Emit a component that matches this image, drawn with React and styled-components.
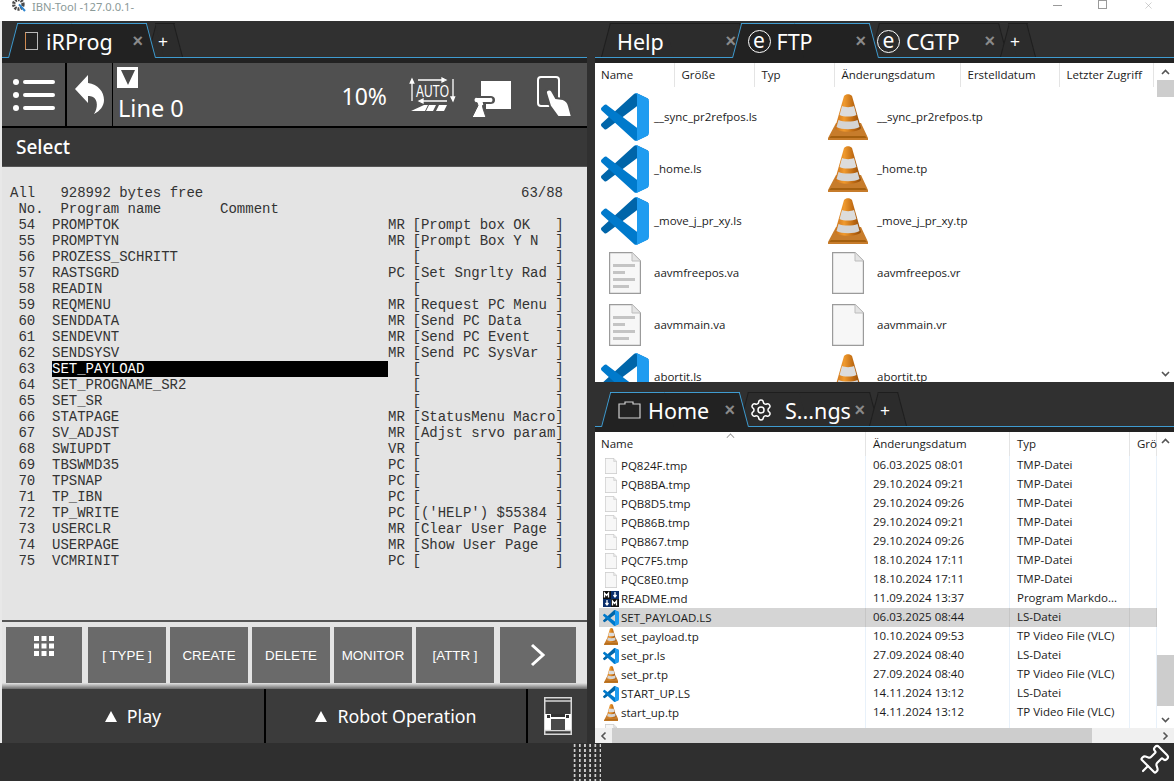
import React from 'react'
import styled, { createGlobalStyle, css } from 'styled-components'
import { Pin, Settings, X } from 'lucide-react'

const GlobalStyle = createGlobalStyle`
  html, body { margin: 0; padding: 0; background: #fff; }
  * { box-sizing: border-box; }
`

const UI_FONT = `"Noto Sans", "Open Sans", sans-serif`
const LIST_FONT = `"Open Sans", "Noto Sans", sans-serif`

const Window = styled.div`
  width: 1174px;
  height: 781px;
  overflow: hidden;
  display: flex;
  flex-direction: column;
  padding-left: 2px;
  background: #e8e8e8;
  font-family: ${UI_FONT};
`
const TitleBar = styled.div`
  height: 21px;
  margin-left: -2px;
  padding-left: 11px;
  background: #fff;
  display: flex;
  align-items: flex-start;
  overflow: hidden;
  flex: none;
`
const TitleText = styled.span`
  margin-left: 5px;
  font-size: 11.2px;
  line-height: 13px;
  color: #8b9a98;
`
const WindowControls = styled.div`
  margin-left: auto;
  padding-right: 20px;
  display: flex;
  gap: 36px;
  color: #9a9a9a;
`
const MinimizeMark = styled.span`
  width: 9px;
  height: 1px;
  margin-top: 5px;
  background: #9a9a9a;
`
const MaximizeMark = styled.span`
  width: 9px;
  height: 9px;
  border: 1px solid #9a9a9a;
`
const Main = styled.div`
  flex: 1;
  min-height: 0;
  display: flex;
  background: #303030;
`
const LeftPane = styled.section`
  width: 585px;
  flex: none;
  display: flex;
  flex-direction: column;
`
const RightPane = styled.section`
  width: 579px;
  margin-left: 8px;
  flex: none;
  display: flex;
  flex-direction: column;
`
const TabRow = styled.div`
  display: flex;
  padding-left: 6px;
  padding-top: ${p => p.$top}px;
  border-bottom: 1px solid #3f9bd0;
  background: #303030;
  flex: none;
`
const TabBand = styled.div`
  height: 5px;
  background: #222;
  flex: none;
`
const Tab = styled.div`
  position: relative;
  width: ${p => p.$w}px;
  height: 34px;
  margin-left: ${p => p.$ml || 0}px;
  padding: 2px 13px 0 ${p => p.$pl}px;
  display: flex;
  align-items: center;
  color: #fff;
  font-size: 21.5px;
  z-index: ${p => (p.$active ? 2 : 1)};
  ${p => p.$active && css`margin-bottom: -1px; height: 35px; padding-bottom: 1px;`}
  &::before, &::after {
    content: "";
    position: absolute;
    top: 0;
    bottom: 0;
    width: 50%;
    z-index: -1;
    background: ${p => (p.$active ? '#222' : '#2c2c2c')};
    border-top: 1px solid ${p => (p.$active ? '#3f9bd0' : '#1e1e1e')};
  }
  &::before {
    left: 0;
    transform-origin: bottom left;
    transform: skewX(-14.8deg);
    border-left: 1px solid ${p => (p.$active ? '#3f9bd0' : '#1e1e1e')};
  }
  &::after {
    right: 0;
    transform-origin: bottom right;
    transform: skewX(14.8deg);
    border-right: 1px solid ${p => (p.$active ? '#3f9bd0' : '#1e1e1e')};
  }
`
const TabLabel = styled.span`
  margin-top: 2px;
  line-height: 32px;
  white-space: nowrap;
`
const TabClose = styled.span`
  margin-left: auto;
  font-family: "Liberation Sans", sans-serif;
  font-weight: 700;
  font-size: 18px;
  line-height: 18px;
  color: #8a8a8a;
`
const TabPlus = styled.span`
  font-family: "Liberation Sans", sans-serif;
  font-size: 17px;
  font-weight: 400;
  line-height: 17px;
  color: #fff;
`
const MissingGlyph = styled.span`
  width: 13px;
  height: 18px;
  margin-right: 8px;
  border: 1px solid #b9b9b9;
  border-left-color: #d08a50;
  flex: none;
`
const EdgeIcon = styled.span`
  width: 23px;
  height: 23px;
  margin-right: 6px;
  border: 1.5px solid #fff;
  border-radius: 50%;
  font-size: 21px;
  line-height: 18px;
  text-align: center;
  flex: none;
`
const TabGear = styled(Settings)`
  width: 24px;
  height: 24px;
  margin-right: 12px;
  flex: none;
`
const Toolbar = styled.div`
  height: 65px;
  display: flex;
  gap: 2px;
  background: #000;
  border-bottom: 2px solid #000;
  flex: none;
`
const ToolButton = styled.div`
  width: ${p => p.$w}px;
  background: #505050;
  display: flex;
  align-items: center;
  justify-content: center;
  flex: none;
`
const StatusPanel = styled.div`
  flex: 1;
  margin-left: -1px;
  padding: 4px 14px 0 4px;
  background: #505050;
  display: flex;
  color: #fff;
`
const LineBlock = styled.div`
  display: flex;
  flex-direction: column;
`
const TriangleBox = styled.span`
  width: 21px;
  height: 21px;
  background: #fff;
  display: flex;
  justify-content: center;
  padding-top: 3px;
  &::after {
    content: "";
    border-left: 7.5px solid transparent;
    border-right: 7.5px solid transparent;
    border-top: 15px solid #4a4a4a;
  }
`
const LineText = styled.span`
  margin: 5px 0 0 1px;
  font-size: 23.5px;
  line-height: 30px;
`
const Percent = styled.span`
  margin: 14px 23px 0 auto;
  font-size: 23px;
  line-height: 30px;
`
const StatusIcon = styled.svg`
  margin-top: ${p => p.$top}px;
  margin-right: ${p => p.$right}px;
  overflow: visible;
  flex: none;
`
const SelectBar = styled.div`
  height: 39px;
  padding: 1px 0 0 14px;
  background: #383838;
  border-bottom: 1px solid #555;
  color: #fff;
  font-size: 19px;
  font-weight: 500;
  line-height: 37px;
  flex: none;
`
const Screen = styled.div`
  height: 455px;
  padding: 18px 0 0 8px;
  background: #e4e4e4;
  border-bottom: 2px solid #555;
  font-family: "Liberation Mono", "Courier New", monospace;
  font-size: 14px;
  line-height: 16px;
  color: #333;
  flex: none;
  white-space: pre;
`
const InfoLine = styled.div`
  display: flex;
  justify-content: space-between;
  padding-right: 24px;
  height: 16px;
`
const ProgramRow = styled.div`
  display: grid;
  grid-template-columns: 42px 336px 24.5px auto;
  height: 16px;
`
const ProgramName = styled.span`
  ${p => p.$selected && css`background: #000; color: #fff;`}
`
const KeysBar = styled.div`
  height: 67px;
  padding: 5px 0 0 4px;
  display: flex;
  gap: 4px;
  background: linear-gradient(#e4e4e4 0 61px, #bdbdbd 63px, #6a6a6a 67px);
  flex: none;
`
const SoftKey = styled.div`
  width: ${p => (p.$edge ? 76 : 78)}px;
  height: 56px;
  margin: ${p => p.$margin || 0};
  background: #6a6a6a;
  color: #fff;
  font-family: "Liberation Sans", sans-serif;
  font-size: 13.33px;
  display: flex;
  align-items: center;
  justify-content: center;
  white-space: nowrap;
`
const GridKey = styled(SoftKey)`
  align-items: flex-start;
  padding-top: 9px;
`
const BottomBar = styled.div`
  height: 54px;
  display: flex;
  gap: 2px;
  background: #000;
  flex: none;
`
const ModeButton = styled.div`
  width: ${p => p.$w}px;
  background: #3b3b3b;
  color: #fff;
  font-size: 17.8px;
  display: flex;
  align-items: center;
  justify-content: center;
  gap: 10px;
  flex: none;
  &::before {
    content: "";
    border-left: 6px solid transparent;
    border-right: 6px solid transparent;
    border-bottom: 11px solid #fff;
  }
`
const CabinetCell = styled.div`
  flex: 1;
  background: #3b3b3b;
  display: flex;
  align-items: center;
  justify-content: center;
`
const FilePanel = styled.div`
  height: ${p => p.$h}px;
  display: flex;
  background: #fff;
  flex: none;
  overflow: hidden;
  font-family: ${LIST_FONT};
  font-size: 11.5px;
  color: #1b1b1b;
`
const FileArea = styled.div`
  flex: 1;
  min-width: 0;
  display: flex;
  flex-direction: column;
  overflow: hidden;
`
const IconHeader = styled.div`
  height: 24px;
  display: grid;
  grid-template-columns: 79.5px 80px 80px 126px 99px 94.5px;
  flex: none;
`
const HeaderCell = styled.div`
  position: relative;
  padding-left: ${p => p.$pl || 7}px;
  border-right: 1px solid #e4e4e4;
  line-height: 23px;
  white-space: nowrap;
  overflow: visible;
`
const SortMark = styled.span`
  position: absolute;
  top: 2px;
  left: 128px;
  width: 7px;
  height: 7px;
  border-top: 1px solid #8a8a8a;
  border-left: 1px solid #8a8a8a;
  transform: rotate(45deg) scale(.8);
`
const IconGrid = styled.div`
  padding: 4px 0 0 6px;
  display: grid;
  grid-template-columns: 223px 223px;
  grid-auto-rows: 52px;
`
const IconItem = styled.div`
  display: flex;
  align-items: center;
  gap: 5px;
  white-space: nowrap;
`
const ItemName = styled.span`
  margin-top: -2px;
`
const IconSlot = styled.span`
  width: 48px;
  height: 48px;
  display: flex;
  align-items: center;
  justify-content: center;
  flex: none;
`
const ScrollBar = styled.div`
  width: 17px;
  background: #fff;
  display: flex;
  flex-direction: column;
  align-items: stretch;
  flex: none;
`
const ArrowBox = styled.div`
  height: 17px;
  display: flex;
  align-items: center;
  justify-content: center;
  flex: none;
  margin-top: ${p => p.$mt || 0};
`
const Thumb = styled.div`
  height: ${p => p.$h}px;
  margin-top: ${p => p.$top}px;
  background: #cdcdcd;
  flex: none;
`
const DetailHeader = styled.div`
  height: 24px;
  padding-left: 4px;
  display: grid;
  grid-template-columns: 267px 144px 120px 27px;
  flex: none;
`
const DetailRow = styled.div`
  height: 19px;
  margin-left: 4px;
  display: grid;
  grid-template-columns: 267px 144px 120px 27px;
  background: ${p => (p.$selected ? '#d5d5d5' : '#fff')};
  flex: none;
`
const DetailCell = styled.div`
  padding-left: 7px;
  line-height: 18px;
  border-right: 1px solid ${p => (p.$selected ? '#c6c6c6' : '#e8f1fa')};
  white-space: nowrap;
  overflow: hidden;
`
const NameCell = styled(DetailCell)`
  padding-left: 4px;
  display: flex;
  align-items: center;
  gap: 2px;
`
const RowIcon = styled.span`
  width: 16px;
  height: 16px;
  display: flex;
  align-items: center;
  justify-content: center;
  flex: none;
`
const HScrollBar = styled.div`
  height: 15px;
  display: flex;
  align-items: center;
  background: #f0f0f0;
  flex: none;
`
const HArrow = styled.div`
  width: 17px;
  margin-left: ${p => p.$ml || 0};
  display: flex;
  justify-content: center;
  flex: none;
`
const HThumb = styled.div`
  width: 480px;
  height: 15px;
  background: #cdcdcd;
  flex: none;
`
const Footer = styled.footer`
  height: 38px;
  margin-left: -2px;
  padding-left: 572px;
  display: flex;
  background: #2f2f2f;
  flex: none;
`
const DragHandle = styled.div`
  width: 29px;
  height: 38px;
  background-image: radial-gradient(circle, #cfcfcf 1.1px, transparent 1.3px);
  background-size: 5.2px 5px;
`
const PinIcon = styled(Pin)`
  margin: 1px 4px 0 auto;
  width: 34px;
  height: 34px;
  color: #fff;
  transform: rotate(45deg);
`

const VsCodeIcon = ({ size }) => (
  <svg width={size} height={size} viewBox="0 0 100 100">
    <path fill="#0065A9" d="M96.46 10.8 75.86.88C73.47-.27 70.62.21 68.75 2.08L1.3 63.58c-1.81 1.66-1.81 4.51 0 6.17l5.51 5c1.49 1.35 3.72 1.45 5.32.24L93.36 13.37C96.09 11.3 100 13.25 100 16.67v-.24c0-2.4-1.38-4.59-3.54-5.63Z" />
    <path fill="#007ACC" d="M96.46 89.2 75.86 99.12c-2.39 1.15-5.24.67-7.11-1.2L1.3 36.42c-1.81-1.66-1.81-4.51 0-6.17l5.51-5c1.49-1.35 3.72-1.45 5.32-.24l81.23 61.62c2.73 2.07 6.64.12 6.64-3.3v.24c0 2.4-1.38 4.59-3.54 5.63Z" />
    <path fill="#1F9CF0" d="M75.86 99.13c-2.39 1.15-5.24.66-7.11-1.21 2.31 2.31 6.25.67 6.25-2.59V4.67c0-3.26-3.94-4.89-6.25-2.59C70.62.21 73.47-.27 75.86.87l20.6 9.91A6.25 6.25 0 0 1 100 16.41v67.18a6.25 6.25 0 0 1-3.54 5.63L75.86 99.13Z" />
  </svg>
)

const ConeIcon = ({ size }) => (
  <svg width={size * 0.87} height={size} viewBox="0 0 40 46">
    <defs>
      <linearGradient id="coneBody" x1="0" x2="1" y1="0" y2="0">
        <stop offset="0" stopColor="#c9701a" />
        <stop offset=".35" stopColor="#f09a2e" />
        <stop offset=".75" stopColor="#b8640f" />
        <stop offset="1" stopColor="#8f4c0a" />
      </linearGradient>
    </defs>
    <path fill="#c77c2b" d="M8 29 0 44v2h40v-2l-7-15Z" />
    <path fill="#a5600f" d="M3 42h34l2 2H1Z" />
    <path fill="url(#coneBody)" d="M16 2c2-2.500 6-2.500 8 0l9 32c-3 5-23 5-26 0Z" />
    <path fill="#dcdcdc" d="M14 12c3 1.500 9 1.500 12 0l2.400 9c-4 2-13 2-16.800 0Z" />
    <path fill="#d4d4d4" d="M10.500 26c5 2 14 2 19 0l2 7c-5 3-18 3-23 0Z" />
  </svg>
)

const DocIcon = ({ lines, width, height }) => (
  <svg width={width} height={height} viewBox="0 0 32 42">
    <path fill="#f7f7f7" stroke="#9b9b9b" strokeWidth="1.200" d="M.6.6H23L31.400 9v32.400H.6Z" />
    <path fill="#e4e4e4" stroke="#bdbdbd" d="M23 .6V9h8.400" />
    {lines && (
      <g fill="#c4c4c4">
        <rect x="4" y="12" width="22" height="3" />
        <rect x="4" y="19" width="12" height="3" />
        <rect x="4" y="26" width="22" height="3" />
        <rect x="4" y="33" width="16" height="3" />
      </g>
    )}
  </svg>
)

const MarkdownIcon = () => (
  <svg width="16" height="16" viewBox="0 0 16 16">
    <rect width="16" height="16" fill="#0b2f6b" />
    <path fill="#111" d="M0 0h8v8H0zM8 8h8v8H8z" />
    <path stroke="#fff" strokeWidth="1.300" fill="none" d="M1.500 6.500V2l2 2.500 2-2.500v4.500M9.500 14.500V10l2 2.500 2-2.500v4.500" />
    <path stroke="#fff" strokeWidth="1.300" fill="none" d="M12 1v4M10.500 4l1.500 2 1.500-2M4 9v4M2.500 12 4 14l1.500-2" />
  </svg>
)

const Arrow = ({ dir }) => {
  const rotate = { up: 0, down: 180, left: -90, right: 90 }[dir]
  return (
    <svg width="9" height="6" viewBox="0 0 9 6" style={{ transform: `rotate(${rotate}deg)` }}>
      <path d="M1 5l3.500-3.500L8 5" fill="none" stroke="#555" strokeWidth="1.600" />
    </svg>
  )
}

const programs = [
  ['54', 'PROMPTOK', 'MR', 'Prompt box OK   '],
  ['55', 'PROMPTYN', 'MR', 'Prompt Box Y N  '],
  ['56', 'PROZESS_SCHRITT', '', '                '],
  ['57', 'RASTSGRD', 'PC', 'Set Sngrlty Rad '],
  ['58', 'READIN', '', '                '],
  ['59', 'REQMENU', 'MR', 'Request PC Menu '],
  ['60', 'SENDDATA', 'MR', 'Send PC Data    '],
  ['61', 'SENDEVNT', 'MR', 'Send PC Event   '],
  ['62', 'SENDSYSV', 'MR', 'Send PC SysVar  '],
  ['63', 'SET_PAYLOAD', '', '                ', true],
  ['64', 'SET_PROGNAME_SR2', '', '                '],
  ['65', 'SET_SR', '', '                '],
  ['66', 'STATPAGE', 'MR', 'StatusMenu Macro'],
  ['67', 'SV_ADJST', 'MR', 'Adjst srvo param'],
  ['68', 'SWIUPDT', 'VR', '                '],
  ['69', 'TBSWMD35', 'PC', '                '],
  ['70', 'TPSNAP', 'PC', '                '],
  ['71', 'TP_IBN', 'PC', '                '],
  ['72', 'TP_WRITE', 'PC', "('HELP') $55384 "],
  ['73', 'USERCLR', 'MR', 'Clear User Page '],
  ['74', 'USERPAGE', 'MR', 'Show User Page  '],
  ['75', 'VCMRINIT', 'PC', '                '],
]

const softKeys = ['[ TYPE ]', 'CREATE', 'DELETE', 'MONITOR', '[ATTR ]']

const ftpFiles = [
  ['code', '__sync_pr2refpos.ls', 'cone', '__sync_pr2refpos.tp'],
  ['code', '_home.ls', 'cone', '_home.tp'],
  ['code', '_move_j_pr_xy.ls', 'cone', '_move_j_pr_xy.tp'],
  ['text', 'aavmfreepos.va', 'blank', 'aavmfreepos.vr'],
  ['text', 'aavmmain.va', 'blank', 'aavmmain.vr'],
  ['code', 'abortit.ls', 'cone', 'abortit.tp'],
]

const homeFiles = [
  ['doc', 'PQ824F.tmp', '06.03.2025 08:01', 'TMP-Datei'],
  ['doc', 'PQB8BA.tmp', '29.10.2024 09:21', 'TMP-Datei'],
  ['doc', 'PQB8D5.tmp', '29.10.2024 09:26', 'TMP-Datei'],
  ['doc', 'PQB86B.tmp', '29.10.2024 09:21', 'TMP-Datei'],
  ['doc', 'PQB867.tmp', '29.10.2024 09:26', 'TMP-Datei'],
  ['doc', 'PQC7F5.tmp', '18.10.2024 17:11', 'TMP-Datei'],
  ['doc', 'PQC8E0.tmp', '18.10.2024 17:11', 'TMP-Datei'],
  ['md', 'README.md', '11.09.2024 13:37', 'Program Markdo...'],
  ['code', 'SET_PAYLOAD.LS', '06.03.2025 08:44', 'LS-Datei', true],
  ['cone', 'set_payload.tp', '10.10.2024 09:53', 'TP Video File (VLC)'],
  ['code', 'set_pr.ls', '27.09.2024 08:40', 'LS-Datei'],
  ['cone', 'set_pr.tp', '27.09.2024 08:40', 'TP Video File (VLC)'],
  ['code', 'START_UP.LS', '14.11.2024 13:12', 'LS-Datei'],
  ['cone', 'start_up.tp', '14.11.2024 13:12', 'TP Video File (VLC)'],
  ['doc', '', '', ''],
]

const bigIcon = kind => {
  if (kind === 'code') return <VsCodeIcon size={48} />
  if (kind === 'cone') return <ConeIcon size={46} />
  if (kind === 'text') return <DocIcon lines width={32} height={42} />
  return <DocIcon width={32} height={42} />
}

const smallIcon = kind => {
  if (kind === 'code') return <VsCodeIcon size={16} />
  if (kind === 'cone') return <ConeIcon size={17} />
  if (kind === 'md') return <MarkdownIcon />
  return <DocIcon width={12} height={16} />
}

const App = () => {
  return (
    <Window>
      <GlobalStyle />
      <TitleBar>
        <svg width="16" height="16" viewBox="0 0 24 24" style={{ marginTop: -3 }}>
          <circle cx="11" cy="11" r="7" fill="none" stroke="#4a4a4a" strokeWidth="5" strokeDasharray="3 1.500" />
          <path d="M12 11l9 10" stroke="#2e86d0" strokeWidth="3" />
        </svg>
        <TitleText>IBN-Tool -127.0.0.1-</TitleText>
        <WindowControls>
          <MinimizeMark />
          <MaximizeMark />
          <X size={11} strokeWidth={1} />
        </WindowControls>
      </TitleBar>
      <Main>
        <LeftPane>
          <TabRow $top={2}>
            <Tab $active $w={148} $pl={17}>
              <MissingGlyph />
              <TabLabel>iRProg</TabLabel>
              <TabClose>×</TabClose>
            </Tab>
            <Tab $w={36} $ml={-9} $pl={11}>
              <TabPlus>+</TabPlus>
            </Tab>
          </TabRow>
          <TabBand />
          <Toolbar>
            <ToolButton $w={63}>
              <svg width="42" height="34" viewBox="0 0 42 34">
                <g fill="#fff">
                  <circle cx="3" cy="4" r="3" />
                  <circle cx="3" cy="17" r="3" />
                  <circle cx="3" cy="30" r="3" />
                </g>
                <g stroke="#fff" strokeWidth="4" strokeLinecap="round">
                  <path d="M12 4h28M12 17h28M12 30h28" />
                </g>
              </svg>
            </ToolButton>
            <ToolButton $w={45}>
              <svg width="30" height="40" viewBox="0 0 30 40">
                <path fill="#fff" d="M0 14 13 0v8c10 1 16 9 16 17 0 6-4 11-10 14 4-6 4-14-1-17-2-1-3-1-5-1v7Z" />
              </svg>
            </ToolButton>
            <StatusPanel>
              <LineBlock>
                <TriangleBox />
                <LineText>Line 0</LineText>
              </LineBlock>
              <Percent>10%</Percent>
              <StatusIcon $top={10} $right={17} width="45" height="34" viewBox="0 0 45 34">
                <g stroke="#fff" strokeWidth="1.300" fill="#fff">
                  <path d="M2 24V4M2 2 .2 6h3.600ZM8 3h26M36 3l-4-2v4ZM43 2v20M43 24l-2-4h3.600ZM37 24H11M9 24l4-2v4Z" />
                </g>
                <text x="22.500" y="19.500" textAnchor="middle" fontFamily="Liberation Sans, sans-serif" fontSize="17" textLength="33" lengthAdjust="spacingAndGlyphs" fill="#fff">AUTO</text>
                <path fill="#fff" d="M1 34 14 28h4l-3 6ZM19 28h7l-3 6h-7ZM29 28h8l-3 6h-8Z" />
              </StatusIcon>
              <StatusIcon $top={13} $right={25} width="40" height="38" viewBox="0 0 40 38">
                <path fill="#fff" d="M9 1h30v28H14v-5h4c3 0 5-1 5-4s-2-4-5-4H9Z" />
                <path fill="#fff" stroke="#505050" strokeWidth="1" d="M2 20c0-1.500 1-2.500 2.500-2.500h14c1.500 0 2.500 1 2.500 2.500s-1 2.500-2.500 2.500H11l1 2-1.500 1 .5 3 3 9H0l4-8 2-4-1-3h-.5C3 22.500 2 21.500 2 20Z" />
              </StatusIcon>
              <StatusIcon $top={9} $right={0} width="36" height="42" viewBox="0 0 36 42">
                <rect x="1" y="1" width="21" height="29" rx="3" fill="none" stroke="#fff" strokeWidth="2" />
                <path fill="#fff" stroke="#505050" strokeWidth="2" d="M9 17c-1-3 4-5 6-2l4 7 7 1c3 1 5 3 6 7l3 11H21l-8-11Z" />
              </StatusIcon>
            </StatusPanel>
          </Toolbar>
          <SelectBar>Select</SelectBar>
          <Screen>
            <InfoLine>
              <span>All   928992 bytes free</span>
              <span>63/88</span>
            </InfoLine>
            <InfoLine>{' No.  Program name       Comment'}</InfoLine>
            {programs.map(([no, name, kind, comment, selected]) => (
              <ProgramRow key={no}>
                <span>{` ${no}`}</span>
                <ProgramName $selected={selected}>{name}</ProgramName>
                <span>{kind}</span>
                <span>{`[${comment}]`}</span>
              </ProgramRow>
            ))}
          </Screen>
          <KeysBar>
            <GridKey $edge $margin="0 2px 0 0">
              <svg width="20" height="20" viewBox="0 0 20 20" fill="#fff">
                {[0, 7.500, 15].map(y => [0, 7.500, 15].map(x => (
                  <rect key={`${x}-${y}`} x={x} y={y} width="5" height="5" />
                )))}
              </svg>
            </GridKey>
            {softKeys.map(label => <SoftKey key={label}>{label}</SoftKey>)}
            <SoftKey $edge $margin="0 0 0 2px">
              <svg width="16" height="24" viewBox="0 0 16 24">
                <path d="M2 2l11 10L2 22" fill="none" stroke="#fff" strokeWidth="3" />
              </svg>
            </SoftKey>
          </KeysBar>
          <BottomBar>
            <ModeButton $w={262}>Play</ModeButton>
            <ModeButton $w={260}>Robot Operation</ModeButton>
            <CabinetCell>
              <svg width="28" height="38" viewBox="0 0 28 38">
                <rect x=".75" y=".75" width="26.500" height="36.500" fill="#3b3b3b" stroke="#d8d8d8" strokeWidth="1.500" />
                <rect x="1" y="17" width="26" height="16" fill="#fff" />
                <path d="M1 4h26M1 33.500h26" stroke="#d8d8d8" strokeWidth="1.500" />
                <rect x="3" y="18" width="3" height="3" fill="#333" />
                <rect x="22" y="18" width="3" height="3" fill="#333" />
                <rect x="7" y="17" width="14" height="3" fill="#333" />
                <rect x="7" y="22" width="14" height="11" fill="#4a4a4a" />
              </svg>
            </CabinetCell>
          </BottomBar>
        </LeftPane>
        <RightPane>
          <TabRow $top={2}>
            <Tab $w={148} $pl={16}>
              <TabLabel>Help</TabLabel>
              <TabClose>×</TabClose>
            </Tab>
            <Tab $active $w={147.5} $ml={-17.5} $pl={16}>
              <EdgeIcon>e</EdgeIcon>
              <TabLabel>FTP</TabLabel>
              <TabClose>×</TabClose>
            </Tab>
            <Tab $w={138} $ml={-9} $pl={7}>
              <EdgeIcon>e</EdgeIcon>
              <TabLabel>CGTP</TabLabel>
              <TabClose>×</TabClose>
            </Tab>
            <Tab $w={36} $ml={-8} $pl={10}>
              <TabPlus>+</TabPlus>
            </Tab>
          </TabRow>
          <TabBand />
          <FilePanel $h={319}>
            <FileArea>
              <IconHeader>
                {['Name', 'Größe', 'Typ', 'Änderungsdatum', 'Erstelldatum', 'Letzter Zugriff'].map(label => (
                  <HeaderCell key={label} $pl={label === 'Name' ? 6 : 7}>{label}</HeaderCell>
                ))}
              </IconHeader>
              <IconGrid>
                {ftpFiles.map(([leftKind, leftName, rightKind, rightName]) => (
                  <React.Fragment key={leftName}>
                    <IconItem><IconSlot>{bigIcon(leftKind)}</IconSlot><ItemName>{leftName}</ItemName></IconItem>
                    <IconItem><IconSlot>{bigIcon(rightKind)}</IconSlot><ItemName>{rightName}</ItemName></IconItem>
                  </React.Fragment>
                ))}
              </IconGrid>
            </FileArea>
            <ScrollBar>
              <ArrowBox><Arrow dir="up" /></ArrowBox>
              <Thumb $h={17} $top={0} />
              <ArrowBox $mt="auto"><Arrow dir="down" /></ArrowBox>
            </ScrollBar>
          </FilePanel>
          <TabRow $top={10}>
            <Tab $active $w={147} $pl={17}>
              <svg width="23" height="18" viewBox="0 0 23 18" style={{ marginRight: 7, flex: 'none' }}>
                <path d="M1 17V3h6V1h8v2h7v14Z" fill="none" stroke="#d0d0d0" strokeWidth="1.200" />
              </svg>
              <TabLabel>Home</TabLabel>
              <TabClose>×</TabClose>
            </Tab>
            <Tab $w={139} $ml={-9} $pl={10}>
              <TabGear strokeWidth={1.5} />
              <TabLabel>S...ngs</TabLabel>
              <TabClose>×</TabClose>
            </Tab>
            <Tab $w={37} $ml={-9} $pl={11}>
              <TabPlus>+</TabPlus>
            </Tab>
          </TabRow>
          <TabBand />
          <FilePanel $h={296}>
            <FileArea>
              <DetailHeader>
                <HeaderCell $pl={2}>Name<SortMark /></HeaderCell>
                <HeaderCell>Änderungsdatum</HeaderCell>
                <HeaderCell>Typ</HeaderCell>
                <HeaderCell>Grö</HeaderCell>
              </DetailHeader>
              {homeFiles.map(([kind, name, date, type, selected], i) => (
                <DetailRow key={i} $selected={selected}>
                  <NameCell $selected={selected}>
                    <RowIcon>{smallIcon(kind)}</RowIcon>{name}
                  </NameCell>
                  <DetailCell $selected={selected}>{date}</DetailCell>
                  <DetailCell $selected={selected}>{type}</DetailCell>
                  <DetailCell $selected={selected} />
                </DetailRow>
              ))}
            </FileArea>
            <ScrollBar>
              <ArrowBox><Arrow dir="up" /></ArrowBox>
              <Thumb $h={51} $top={206} />
              <ArrowBox $mt="auto"><Arrow dir="down" /></ArrowBox>
            </ScrollBar>
          </FilePanel>
          <HScrollBar>
            <HArrow><Arrow dir="left" /></HArrow>
            <HThumb />
            <HArrow $ml="auto"><Arrow dir="right" /></HArrow>
          </HScrollBar>
        </RightPane>
      </Main>
      <Footer>
        <DragHandle />
        <PinIcon strokeWidth={1.5} />
      </Footer>
    </Window>
  )
}

export default App
